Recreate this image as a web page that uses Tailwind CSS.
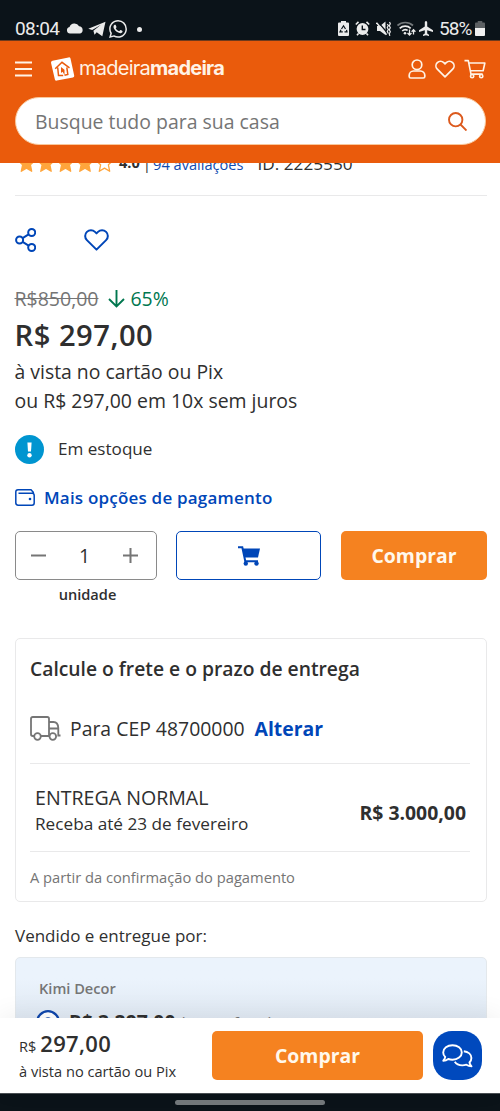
<!DOCTYPE html>
<html lang="pt-BR">
<head>
<meta charset="utf-8">
<title>MadeiraMadeira</title>
<script src="https://cdn.jsdelivr.net/npm/@tailwindcss/browser@4"></script>
</head>
<body class="bg-white">
<div class="flex h-[1111px] w-[500px] flex-col overflow-hidden bg-white font-['Open_Sans',sans-serif] text-[#2f2f2f]">

  <!-- Status bar -->
  <div class="flex h-[41px] shrink-0 items-start border-b border-[#6e3a1c] bg-[#0b1319] pt-[18px] pl-[15px] pr-[15px] font-['Roboto',sans-serif] text-[#ebebeb]">
    <span class="w-[51px] text-[19px] leading-[21px] tracking-[-0.6px]">08:04</span>
    <svg class="mt-[5px] h-[11px] w-[18px]" viewBox="0 0 18 11" fill="currentColor"><path d="M4 10.5a3.3 3.3 0 0 1-.5-6.5 5.3 5.3 0 0 1 9.6-.7 3.700 3.700 0 0 1 1 7.200z"/></svg>
    <svg class="ml-[4px] mt-[3px] h-[16px] w-[18px]" viewBox="0 0 18 16" fill="currentColor"><path d="M0.300 7.800 17.500.7 14.300 15.300 8.700 11.300 6.500 13.800 5.400 9.700 13 3.800 4.200 9z"/><path d="M6.600 9.800 13.500 3.800 8.500 10.200z"/></svg>
    <svg class="ml-[3px] mt-[2px] h-[18px] w-[18px]" viewBox="0 0 24 24" fill="currentColor"><path d="M17.472 14.382c-.297-.149-1.758-.867-2.030-.967-.273-.099-.471-.148-.67.150-.197.297-.767.966-.94 1.164-.173.199-.347.223-.644.075-.297-.150-1.255-.463-2.390-1.475-.883-.788-1.480-1.761-1.653-2.059-.173-.297-.018-.458.130-.606.134-.133.298-.347.446-.520.149-.174.198-.298.298-.497.099-.198.050-.371-.025-.520-.075-.149-.669-1.612-.916-2.207-.242-.579-.487-.5-.669-.510-.173-.008-.371-.010-.570-.010-.198 0-.520.074-.792.372-.272.297-1.040 1.016-1.040 2.479 0 1.462 1.065 2.875 1.213 3.074.149.198 2.096 3.200 5.077 4.487.709.306 1.262.489 1.694.625.712.227 1.360.195 1.871.118.571-.085 1.758-.719 2.006-1.413.248-.694.248-1.289.173-1.413-.074-.124-.272-.198-.570-.347m-5.421 7.403h-.004a9.870 9.870 0 0 1-5.031-1.378l-.361-.214-3.741.982.998-3.648-.235-.374a9.860 9.860 0 0 1-1.510-5.260c.001-5.450 4.436-9.884 9.888-9.884 2.640 0 5.122 1.030 6.988 2.898a9.825 9.825 0 0 1 2.893 6.994c-.003 5.450-4.437 9.884-9.885 9.884m8.413-18.297A11.815 11.815 0 0 0 12.050 0C5.495 0 .160 5.335.157 11.892c0 2.096.547 4.142 1.588 5.945L.057 24l6.305-1.654a11.882 11.882 0 0 0 5.683 1.448h.005c6.554 0 11.890-5.335 11.893-11.893a11.821 11.821 0 0 0-3.480-8.413z"/></svg>
    <span class="ml-[10px] mt-[9px] h-[5px] w-[5px] rounded-full bg-[#ebebeb]"></span>
    <div class="ml-auto flex items-start">
      <svg class="mt-[3px] h-[15px] w-[11px]" viewBox="0 0 11 15"><path fill="currentColor" d="M3 0h5v1.500h2a1 1 0 0 1 1 1V14a1 1 0 0 1-1 1H1a1 1 0 0 1-1-1V2.500a1 1 0 0 1 1-1h2z"/><path d="M3.500 8 5.500 4.800 7.500 8M8.500 8.800 9 10.800H6.500M4.800 10.800H2L3 8.800" fill="none" stroke="#0b1319" stroke-width="1.200"/></svg>
      <svg class="ml-[6px] mt-[3px] h-[15px] w-[15px]" viewBox="0 0 15 15" fill="none"><circle cx="7.500" cy="8" r="5.900" fill="currentColor"/><path d="M.8 3.500 3.500.9M11.500.9l2.700 2.600M3.500 12.500 2 14.300M11.500 12.500l1.500 1.800" stroke="currentColor" stroke-width="1.600"/><path d="M7.300 4.500V8.500h3.200" stroke="#0b1319" stroke-width="1.400"/></svg>
      <svg class="ml-[6px] mt-[3px] h-[15px] w-[15px]" viewBox="0 0 15 15" fill="none"><path fill="currentColor" d="M1 5h3l5.500-4.500V14L4 10H1z"/><path d="M1.500.5 11.500 12" stroke="#0b1319" stroke-width="1.300"/><path d="M.5 1.700 10.500 13.700" stroke="currentColor" stroke-width="1.500"/><path d="m11.300 3 1 1.500-1 2 1 2-1 2 1 2M13.500 1l.8 1.800-1 2 1 2-1 2 1 2-1 2 .5 2" stroke="currentColor" stroke-width="1.200"/></svg>
      <svg class="ml-[6px] mt-[3px] h-[15px] w-[19px]" viewBox="0 0 19 15" fill="none" stroke="currentColor" stroke-width="1.700"><path d="M.5 4.500A11.500 11.500 0 0 1 16 4.500" stroke="#74797c"/><path d="M2.700 7.300a8 8 0 0 1 11 0M5.200 10a4.500 4.500 0 0 1 5.500-.6"/><circle cx="8" cy="12.300" r="1.300" fill="currentColor" stroke="none"/><path stroke-width="1.300" d="M12.500 8.500V14m-2-2 2 2 2-2M16.500 13.500V8.700m-1.900 2 1.900-2 1.900 2"/></svg>
      <svg class="ml-[3px] mt-[3px] h-[15px] w-[14px]" viewBox="0 0 14 15" fill="currentColor"><path d="M7 0c.8 0 1.200.8 1.200 1.600v4L14 9.300v1.600L8.200 9.200v3.200l1.800 1.400V15l-3-.8-3 .8v-1.200l1.800-1.400V9.200L0 10.900V9.300l5.800-3.700v-4C5.800.8 6.200 0 7 0z"/></svg>
      <span class="ml-[6px] w-[34px] whitespace-nowrap text-[19px] leading-[21px] tracking-[-0.900px]">58%</span>
      <svg class="ml-[2px] mt-[3px] h-[15px] w-[10px]" viewBox="0 0 11 15" preserveAspectRatio="none"><path fill="#5c6063" d="M3 0h5v1.500h2a1 1 0 0 1 1 1V7H0V2.500a1 1 0 0 1 1-1h2z"/><path fill="#f0f0f0" d="M0 7h11v7a1 1 0 0 1-1 1H1a1 1 0 0 1-1-1z"/></svg>
    </div>
  </div>

  <!-- Header -->
  <header class="relative z-10 flex h-[122px] shrink-0 flex-col bg-[#ea5b0c] pl-[15px] pr-[14px]">
    <div class="flex h-[56px] items-center text-[#fff3e6]">
      <svg class="h-[16px] w-[17px]" viewBox="0 0 17 16" stroke="currentColor" stroke-width="2"><path d="M0 1.500h17M0 8h17M0 14.500h17"/></svg>
      <svg class="ml-[18px] h-[24px] w-[25px]" viewBox="0 0 25 24" fill="none"><path d="M2.500 3.800 18.500.4q1.600-.3 2 1.200l3.700 17q.3 1.500-1.200 1.900L6.800 23.600q-1.500.3-1.900-1.200L1 5.700q-.2-1.500 1.500-1.900z" fill="#fff"/><path d="M5.200 11.800 12 5.300l7.500 5.500M7.700 10.500l.8 8h4.700M16.800 10.300l1 7.200-3.300.8" stroke="#ea5b0c" stroke-width="1.500"/><path d="M11 10v6l1.600-1.200L14.500 18V12.800z" fill="#ea5b0c"/></svg>
      <span class="mb-[2px] ml-[4px] whitespace-nowrap font-['Inter',sans-serif] text-[20px] leading-[24px] tracking-[-0.750px]">madeira<b class="font-bold">madeira</b></span>
      <div class="ml-auto flex items-center gap-[9px]">
        <svg class="h-[20px] w-[18px]" viewBox="0 0 18 20" fill="none" stroke="currentColor" stroke-width="1.700"><circle cx="9" cy="5.800" r="4.800"/><path d="M5.500 12h7a4.300 4.300 0 0 1 4.300 4.300v1.200q0 1.500-1.500 1.500H2.700q-1.500 0-1.500-1.500v-1.200A4.300 4.300 0 0 1 5.500 12z"/></svg>
        <svg class="h-[18px] w-[20px]" viewBox="0 0 20 18" fill="none" stroke="currentColor" stroke-width="1.700" stroke-linejoin="round"><path d="M10 16.800 2.300 9.200a4.700 4.700 0 0 1 0-6.600 4.600 4.600 0 0 1 6.500 0L10 3.800l1.200-1.200a4.600 4.600 0 0 1 6.500 0 4.700 4.700 0 0 1 0 6.600z"/></svg>
        <svg class="h-[20px] w-[22px]" viewBox="0 0 23 20" fill="none" stroke="currentColor" stroke-width="1.700" stroke-linejoin="round"><path d="M.5 1.200H4.500L7.300 15.300H19.500M5 3.700H21.800L20 11.800H6.700"/><circle cx="8.500" cy="17.500" r="1.700"/><circle cx="18" cy="17.500" r="1.700"/></svg>
      </div>
    </div>
    <div class="flex h-[48px] w-[471px] items-center rounded-full border border-[#f9c89c] bg-white pl-[19px] pr-[18px]">
      <span class="pt-px text-[19.450px] text-[#757575]">Busque tudo para sua casa</span>
      <svg class="ml-auto h-[19px] w-[19px]" viewBox="0 0 19 19" fill="none" stroke="#dc5a1e" stroke-width="1.900"><circle cx="7.700" cy="7.700" r="6.700"/><path d="m12.500 12.500 6 6"/></svg>
    </div>
  </header>

  <!-- Product -->
  <main class="flex h-[855px] shrink-0 flex-col overflow-hidden pl-[15px] pr-[13px]">
    <div class="flex h-[33px] shrink-0 items-start border-b border-[#e9e9ea]">
      <div class="-mt-[12px] flex h-[24px] items-center whitespace-nowrap">
        <svg class="ml-[3px] h-[19px] w-[95px]" viewBox="0 0 95 19" fill="#ffa53c" stroke="#ffa53c" stroke-width="1.300" stroke-linejoin="round">
          <defs><path id="star" d="m8.500 1 2.400 5.300 5.500.7-4 3.800 1.300 6.500-5.200-3.200-5.200 3.200 1.300-6.500-4-3.800 5.500-.7z"/></defs>
          <use href="#star"/><use href="#star" x="19.500"/><use href="#star" x="39"/><use href="#star" x="58.500"/><use href="#star" x="78" fill="none"/>
        </svg>
        <span class="ml-[6px] pb-[2px] text-[14.600px] leading-[20px] font-bold">4.0</span>
        <span class="ml-[3px] text-[15px] leading-[20px]">|</span>
        <span class="ml-[2px] pt-px text-[14.600px] leading-[20px] text-[#0f4baf]">94 avaliações</span>
        <span class="ml-[14px] pt-px text-[17.200px] leading-[20px]">ID: 2225550</span>
      </div>
    </div>

    <div class="flex h-[88px] shrink-0 items-center">
      <svg class="h-[24px] w-[21px]" viewBox="0 0 21 24" fill="none" stroke="#0046b8" stroke-width="2"><circle cx="4.600" cy="12" r="3.500"/><circle cx="16.700" cy="4.500" r="3.500"/><circle cx="16.700" cy="19.500" r="3.500"/><path d="m7.600 10.200 6-3.800M7.600 13.800l6 3.800"/></svg>
      <svg class="ml-[48px] h-[22px] w-[25px]" viewBox="0 0 25 22" fill="none" stroke="#0046b8" stroke-width="2" stroke-linejoin="round"><path d="M12.500 20.600 2.900 11.100a5.700 5.700 0 0 1 0-8.200 5.800 5.800 0 0 1 8.100 0l1.500 1.500L14 2.900a5.800 5.800 0 0 1 8.100 0 5.700 5.700 0 0 1 0 8.200z"/></svg>
    </div>

    <div class="-ml-[0.500px] flex h-[30px] shrink-0 items-center">
      <span class="text-[19.500px] text-[#757575] line-through">R$850,00</span>
      <svg class="ml-[10px] h-[18px] w-[17px]" viewBox="0 0 17 18" fill="none" stroke="#00774f" stroke-width="1.900"><path d="M8.500 0v16.500M1 9l7.500 7.500L16 9"/></svg>
      <span class="ml-[5px] text-[19.400px] text-[#00774f]">65%</span>
    </div>
    <div class="-ml-[0.500px] flex h-[42px] shrink-0 items-center pt-[2px] text-[29.200px] font-semibold tracking-[0.500px]">R$ 297,00</div>
    <div class="-ml-[0.500px] flex h-[30px] shrink-0 items-center pt-px text-[19.400px]">à vista no cartão ou Pix</div>
    <div class="-ml-[0.500px] flex h-[29px] shrink-0 items-center text-[19.450px]">ou R$ 297,00 em 10x sem juros</div>

    <div class="flex h-[68px] shrink-0 items-center">
      <svg class="h-[29px] w-[29px]" viewBox="0 0 29 29"><circle cx="14.500" cy="14.500" r="14.500" fill="#0095d0"/><path d="M12.400 7.500h4.200l-.6 9h-3z" fill="#fff"/><circle cx="14.500" cy="20.300" r="2.200" fill="#fff"/></svg>
      <span class="ml-[14px] text-[17.100px]">Em estoque</span>
    </div>
    <div class="flex h-[29px] shrink-0 items-center text-[#0046b8]">
      <svg class="h-[17px] w-[20px]" viewBox="0 0 20 17" fill="none" stroke="currentColor" stroke-width="1.500"><path d="M18.300 4.500V3.300L16 .8H3Q.8.800.8 3v10.800q0 2.400 2.400 2.400H17q2.200 0 2.200-2.200V6.500Q19.200 4.300 17 4.300H3.500"/><circle cx="15" cy="10" r="1.300" fill="currentColor" stroke="none"/></svg>
      <span class="ml-[9px] text-[17px] font-semibold tracking-[0.200px]">Mais opções de pagamento</span>
    </div>

    <div class="mt-[19px] flex h-[49px] w-[472px] shrink-0">
      <div class="flex w-[142px] items-center rounded-[5px] border border-[#8a8a8a] pl-[15px] pr-[18px]">
        <svg class="h-[15px] w-[15px]" viewBox="0 0 15 15" stroke="#757575" stroke-width="2"><path d="M0 7.500h15"/></svg>
        <span class="flex-1 text-center text-[19.400px]">1</span>
        <svg class="h-[15px] w-[15px]" viewBox="0 0 15 15" stroke="#757575" stroke-width="2"><path d="M0 7.500h15M7.500 0v15"/></svg>
      </div>
      <div class="ml-[19px] flex w-[145px] items-center justify-center rounded-[5px] border border-[#0046b8]">
        <svg class="h-[20px] w-[22px]" viewBox="0 0 22 20" fill="none" stroke="#0046b8"><path d="M0 1.200h4.300L7.300 15.300H20" stroke-width="2"/><path d="M4.500 2.500H22L20 11.500H6.500z" fill="#0046b8" stroke="none"/><circle cx="7.800" cy="17.500" r="2.200" fill="#0046b8" stroke="none"/><circle cx="18.500" cy="17.500" r="2.200" fill="#0046b8" stroke="none"/></svg>
      </div>
      <div class="ml-[20px] flex w-[146px] items-center justify-center rounded-[5px] bg-[#f58220] text-[19.400px] font-bold text-[#fff8ec]">Comprar</div>
    </div>
    <div class="flex h-[30px] w-[145px] shrink-0 items-center justify-center text-[14.600px] font-semibold">unidade</div>

    <section class="mt-[28px] flex h-[264px] w-[472px] shrink-0 flex-col rounded-[5px] border border-[#e9e9ea] pl-[14px] pr-[16px]">
      <h2 class="flex h-[60px] shrink-0 items-center text-[19.300px] font-semibold">Calcule o frete e o prazo de entrega</h2>
      <div class="flex h-[65px] shrink-0 items-center border-b border-[#e9e9ea] text-[19.400px] whitespace-nowrap">
        <svg class="mb-[5px] h-[25px] w-[31px]" viewBox="0 0 31 25" fill="none" stroke="#757575" stroke-width="1.800"><path d="M4 20H2.800Q1 20 1 18.300V2.700Q1 1 2.800 1H17.300Q19 1 19 2.700V20M11 20h8M19 6h4.500Q28 6 28.300 12v7.500H30.500M19 12.500h9.300"/><circle cx="7.500" cy="20.500" r="3.300" fill="#fff"/><circle cx="22.800" cy="20.500" r="3.300" fill="#fff"/></svg>
        <span class="mb-[4px] ml-[9px]">Para CEP 48700000</span>
        <span class="mb-[4px] ml-[10px] font-bold text-[#0046b8]">Alterar</span>
      </div>
      <div class="flex h-[88px] shrink-0 items-center justify-between border-b border-[#e9e9ea] pl-[5px] pr-[4px] pt-[5px]">
        <div>
          <div class="text-[19.600px] leading-[27px]">ENTREGA NORMAL</div>
          <div class="text-[17.200px] leading-[26px]">Receba até 23 de fevereiro</div>
        </div>
        <div class="pt-[5px] text-[19.400px] font-bold">R$ 3.000,00</div>
      </div>
      <div class="flex flex-1 items-center pt-px text-[14.700px] text-[#757575]">A partir da confirmação do pagamento</div>
    </section>

    <div class="flex h-[55px] shrink-0 items-center pt-[13px] text-[17px]">Vendido e entregue por:</div>
    <section class="flex h-[140px] w-[472px] shrink-0 flex-col rounded-[5px] border border-[#e3e8ec] bg-linear-to-b from-[#ebf3fc] from-15% to-[#dfe8f2] to-45% px-[23px] pt-[20px]">
      <div class="text-[14.600px] leading-[20px] font-semibold text-[#757575]">Kimi Decor</div>
      <div class="mt-[7px] flex h-[34px] items-center whitespace-nowrap">
        <svg class="-ml-[3px] h-[24px] w-[24px]" viewBox="0 0 24 24"><circle cx="12" cy="12" r="10.800" fill="#fff" stroke="#0f46ab" stroke-width="2.300"/><circle cx="12" cy="12" r="4.800" fill="#0f46ab"/></svg>
        <span class="ml-[9px] text-[19.400px] font-bold">R$ 3.297,00</span>
        <span class="ml-[5px] pt-[3px] text-[15.500px] text-[#757575]">(com o frete)</span>
      </div>
    </section>
  </main>

  <!-- Purchase bar -->
  <footer class="relative z-10 flex h-[75px] shrink-0 bg-white pl-[19px] pt-[13px] shadow-[0_-4px_24px_rgba(0,0,0,0.06)]">
    <div class="w-[193px] whitespace-nowrap">
      <div class="-mt-px flex h-[27px] items-baseline leading-[27px]"><span class="text-[14.600px] leading-[27px]">R$</span><span class="ml-[4px] text-[22px] leading-[27px] font-semibold tracking-[0.300px]">297,00</span></div>
      <div class="text-[14.600px] leading-[28px]">à vista no cartão ou Pix</div>
    </div>
    <div class="flex h-[49px] w-[211px] items-center justify-center rounded-[5px] bg-[#f58220] text-[19.400px] font-bold text-[#fff8ec]">Comprar</div>
    <div class="ml-[10px] flex h-[49px] w-[49px] items-center justify-center rounded-[19px] bg-[#0049bd]">
      <svg class="h-[24px] w-[31px]" viewBox="0 0 31 24" fill="none" stroke="#fff" stroke-width="1.900" stroke-linejoin="round"><path d="M10.500 1.200c5.200 0 9.300 3.100 9.300 7.200s-4.100 7.300-9.300 7.300c-1.500 0-2.900-.2-4.200-.7-1.200.9-3 1.700-5 1.700 1.100-1.200 1.700-2.400 1.900-3.800C1.900 11.600 1.200 10 1.200 8.400c0-4.100 4.100-7.200 9.300-7.200z"/><path d="M21.800 7.300c4.300.5 7.600 3.200 7.600 6.700 0 1.700-.7 3.200-1.900 4.500.2 1.400.9 2.600 2 3.800-2.100 0-3.800-.7-5.100-1.600-1.200.4-2.600.7-4.100.7-3.300 0-6.200-1.500-7.500-3.600"/></svg>
    </div>
  </footer>

  <!-- System navigation -->
  <div class="flex h-[18px] shrink-0 items-center justify-center border-t border-[#4b5054] bg-[#0b1319]">
    <div class="h-[5px] w-[150px] rounded-full bg-[#73787b]"></div>
  </div>
</div>
</body>
</html>
